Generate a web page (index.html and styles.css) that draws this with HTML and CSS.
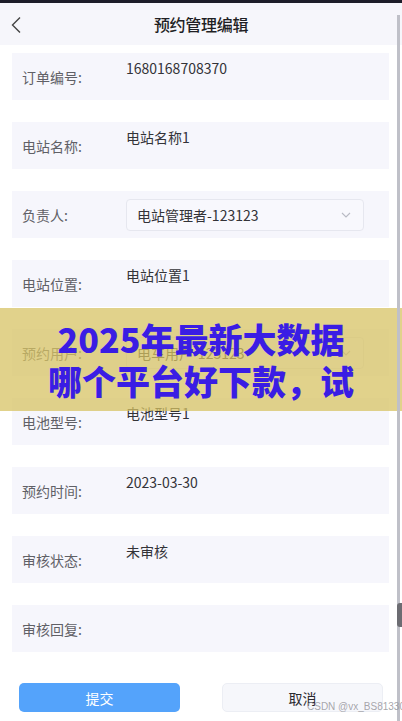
FILE: index.html
```html
<!DOCTYPE html>
<html lang="zh-CN">
<head>
    <meta charset="UTF-8">
    <meta name="viewport" content="width=device-width, initial-scale=1.0">
    <title>预约管理编辑</title>
    <link rel="stylesheet" href="styles.css">
</head>
<body>
    <div class="status-strip"></div>

    <header class="nav">
        <svg class="back" width="12" height="18" viewBox="0 0 12 18">
            <path d="M10 1.5 L2.5 9 L10 16.5" fill="none" stroke="#444" stroke-width="1.4"/>
        </svg>
        <h1>预约管理编辑</h1>
    </header>

    <main class="form">
        <div class="row">
            <span class="label">订单编号:</span>
            <span class="value">1680168708370</span>
        </div>
        <div class="row">
            <span class="label">电站名称:</span>
            <span class="value">电站名称1</span>
        </div>
        <div class="row">
            <span class="label">负责人:</span>
            <div class="select">
                <span>电站管理者-123123</span>
                <svg width="10" height="6" viewBox="0 0 10 6"><path d="M1 1 L5 5 L9 1" fill="none" stroke="#b8bac4" stroke-width="1.1"/></svg>
            </div>
        </div>
        <div class="row">
            <span class="label">电站位置:</span>
            <span class="value">电站位置1</span>
        </div>
        <div class="row">
            <span class="label">预约用户:</span>
            <div class="select">
                <span>电车用户-123123</span>
                <svg width="10" height="6" viewBox="0 0 10 6"><path d="M1 1 L5 5 L9 1" fill="none" stroke="#b8bac4" stroke-width="1.1"/></svg>
            </div>
        </div>
        <div class="row">
            <span class="label">电池型号:</span>
            <span class="value">电池型号1</span>
        </div>
        <div class="row">
            <span class="label">预约时间:</span>
            <span class="value">2023-03-30</span>
        </div>
        <div class="row">
            <span class="label">审核状态:</span>
            <span class="value">未审核</span>
        </div>
        <div class="row">
            <span class="label">审核回复:</span>
            <span class="value"></span>
        </div>

        <div class="actions">
            <button class="btn btn-primary">提交</button>
            <button class="btn btn-default">取消</button>
        </div>
    </main>

    <!-- 广告横幅 -->
    <div class="banner">
        <p>2025年最新大数据</p>
        <p>哪个平台好下款，试</p>
    </div>

    <div class="scrollbar"><div class="thumb"></div></div>
    <div class="watermark">CSDN @vx_BS81330</div>
</body>
</html>
```

FILE: styles.css
```css
body {
    margin: 0;
    font-family: "Noto Sans CJK SC", "Noto Sans", sans-serif;
    background-color: #fff;
    width: 402px;
    height: 721px;
    overflow: hidden;
    position: relative;
}

.status-strip {
    height: 3px;
    background-color: #1d1d29;
}

.nav {
    height: 42px;
    background-color: #f6f6fb;
    display: flex;
    align-items: center;
    justify-content: center;
    position: relative;
}

.nav .back {
    position: absolute;
    left: 10px;
    top: 13px;
}

.nav h1 {
    margin: 0;
    font-size: 16px;
    font-weight: 500;
    color: #1f1f24;
    letter-spacing: -0.3px;
}

.form {
    display: flex;
    flex-direction: column;
    gap: 22px;
    padding-top: 8px;
}

.row {
    margin: 0 13px 0 12px;
    height: 47px;
    background-color: #f6f6fc;
    display: flex;
    align-items: center;
}

.label {
    width: 104px;
    padding-left: 10px;
    padding-top: 1px;
    font-size: 14px;
    color: #606066;
}

.value {
    align-self: flex-start;
    padding-top: 5px;
    font-size: 14px;
    line-height: 21px;
    color: #333338;
}

.select {
    width: 238px;
    height: 32px;
    box-sizing: border-box;
    border: 1px solid #e6e7ef;
    border-radius: 4px;
    background-color: #f8f8fd;
    display: flex;
    align-items: center;
    justify-content: space-between;
    padding: 0 12px 0 10px;
    font-size: 14px;
    color: #333338;
}

.actions {
    display: flex;
    gap: 42px;
    padding-left: 19px;
    margin-top: 9px;
}

.btn {
    width: 161px;
    height: 29px;
    border-radius: 5px;
    font-family: inherit;
    font-size: 14px;
    cursor: pointer;
}

.btn-primary {
    background-color: #54a3fb;
    border: none;
    color: #fff;
}

.btn-default {
    background-color: #f6f7fb;
    border: 1px solid #eceef4;
    color: #2a2a30;
}

.banner {
    position: absolute;
    left: 0;
    top: 308px;
    width: 402px;
    height: 103px;
    background-color: rgba(214, 194, 98, 0.74);
    display: flex;
    flex-direction: column;
    justify-content: center;
    align-items: center;
}

.banner p {
    margin: 0;
    font-size: 34px;
    line-height: 42px;
    font-weight: 900;
    color: #3a1de4;
}

.scrollbar {
    position: absolute;
    left: 397px;
    top: 15px;
    width: 3px;
    height: 706px;
    background-color: #bfc0c8;
}

.scrollbar .thumb {
    position: absolute;
    left: 0;
    top: 588px;
    width: 5px;
    height: 24px;
    border-radius: 3px 0 0 3px;
    background-color: #6c6c72;
}

.watermark {
    position: absolute;
    left: 307px;
    top: 701px;
    font-family: "Liberation Sans", sans-serif;
    font-size: 10px;
    color: rgba(150, 150, 156, 0.85);
    white-space: nowrap;
}
```
